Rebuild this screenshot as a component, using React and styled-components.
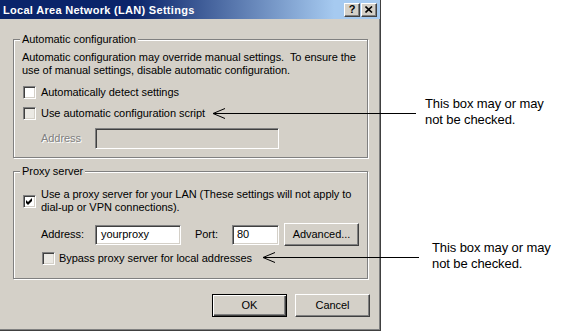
import React from 'react';
import styled, { createGlobalStyle } from 'styled-components';

const GlobalStyle = createGlobalStyle`
  html, body {
    margin: 0;
    padding: 0;
    background: #fff;
  }
  body {
    font-family: "Liberation Sans", Arial, sans-serif;
  }
`;

const Page = styled.div`
  position: relative;
  display: flex;
  align-items: flex-start;
  width: 574px;
  height: 332px;
  overflow: hidden;
`;

const Dialog = styled.div`
  width: 381px;
  height: 331px;
  box-sizing: border-box;
  display: flex;
  flex-direction: column;
  background: #d4d0c8;
  box-shadow: inset -1px -1px 0 #404040, inset -2px -2px 0 #808080;
  font: 11px/13px "Liberation Sans", Arial, sans-serif;
  letter-spacing: -0.05px;
  color: #000;
  white-space: nowrap;
`;

const TitleBar = styled.div`
  height: 19px;
  margin-right: 1px;
  padding: 0 3px;
  display: flex;
  align-items: center;
  justify-content: space-between;
  background: linear-gradient(90deg, #0a246a 0%, #0a246a 35%, #a6caf0 88%);
`;

const Title = styled.span`
  color: #fff;
  font-weight: 700;
  letter-spacing: 0.3px;
  padding-top: 1px;
`;

const TitleButtons = styled.div`
  display: flex;
  gap: 1px;
`;

const TitleButton = styled.div`
  width: 16px;
  height: 14px;
  box-sizing: border-box;
  display: flex;
  align-items: center;
  justify-content: center;
  background: #d4d0c8;
  border: 1px solid;
  border-color: #fff #404040 #404040 #fff;
  box-shadow: inset -1px -1px 0 #808080;
  font-weight: 700;
  font-size: 11px;
  color: #000;
`;

const Body = styled.div`
  flex: 1;
  display: flex;
  flex-direction: column;
  padding: 14px 13px 0 13px;
`;

const GroupBox = styled.fieldset`
  margin: ${p => p.$mt || 0}px 0 0 0;
  padding: ${p => p.$pt}px 8px ${p => p.$pb}px 8px;
  min-width: 0;
  border: 1px solid #808080;
  box-shadow: inset 1px 1px 0 #fff, 1px 1px 0 #fff;
`;

const Legend = styled.legend`
  padding: 0 2px;
  margin-left: -2px;
  background: #d4d0c8;
  line-height: 13px;
`;

const Para = styled.p`
  margin: 0;
`;

const Row = styled.div`
  display: flex;
  align-items: center;
  gap: ${p => p.$gap || 0}px;
  margin: ${p => p.$mt || 0}px 0 0 ${p => p.$ml || 0}px;
`;

const CheckBox = styled.div`
  flex: none;
  width: 13px;
  height: 13px;
  box-sizing: border-box;
  display: flex;
  align-items: center;
  justify-content: center;
  background: ${p => (p.$dim ? '#ebe9e4' : '#fff')};
  border: 1px solid;
  border-color: #808080 #fff #fff #808080;
  box-shadow: inset 1px 1px 0 #404040, inset -1px -1px 0 #d4d0c8;
`;

const Label = styled.span`
  width: ${p => (p.$w ? `${p.$w}px` : 'auto')};
  flex: none;
  margin-left: ${p => p.$ml || 0}px;
  color: ${p => (p.$disabled ? '#808080' : '#000')};
  text-shadow: ${p => (p.$disabled ? '1px 1px 0 #fff' : 'none')};
`;

const TextBox = styled.div`
  width: ${p => p.$w}px;
  height: ${p => p.$h || 20}px;
  box-sizing: border-box;
  flex: none;
  display: flex;
  align-items: center;
  padding-left: ${p => p.$pl || 4}px;
  background: ${p => (p.$disabled ? '#d4d0c8' : '#fff')};
  border: 1px solid;
  border-color: #808080 #fff #fff #808080;
  box-shadow: inset 1px 1px 0 #404040, inset -1px -1px 0 #d4d0c8;
`;

const Button = styled.div`
  width: 75px;
  height: 23px;
  box-sizing: border-box;
  flex: none;
  display: flex;
  align-items: center;
  justify-content: center;
  margin-left: ${p => p.$ml || 0}px;
  background: #d4d0c8;
  border: 1px solid;
  border-color: ${p => (p.$default ? '#000' : '#fff #404040 #404040 #fff')};
  box-shadow: ${p =>
    p.$default
      ? 'inset 1px 1px 0 #fff, inset -1px -1px 0 #404040, inset -2px -2px 0 #808080'
      : 'inset -1px -1px 0 #808080'};
`;

const Footer = styled.div`
  display: flex;
  justify-content: flex-end;
  gap: 8px;
  margin: 15px -2px 0 0;
`;

const Notes = styled.div`
  display: flex;
  flex-direction: column;
  padding-top: 96px;
`;

const Note = styled.div`
  margin: ${p => p.$mt || 0}px 0 0 ${p => p.$ml}px;
  font: 13px/16px "Liberation Sans", Arial, sans-serif;
  letter-spacing: -0.1px;
  color: #000;
  white-space: nowrap;
`;

const Arrows = styled.svg`
  position: absolute;
  left: 0;
  top: 0;
  pointer-events: none;
`;

const Check = ({ checked, dim }) => (
  <CheckBox $dim={dim}>
    {checked && (
      <svg width="9" height="9" viewBox="0 0 9 9">
        <polygon points="1,3 3,5 7,1 7,4 3,8 1,6" fill="#000" />
      </svg>
    )}
  </CheckBox>
);

const Arrow = ({ x1, x2, y }) => (
  <g stroke="#000" strokeWidth="1" fill="none">
    <line x1={x1} y1={y} x2={x2} y2={y} shapeRendering="crispEdges" />
    <polyline points={`${x1 + 12},${y - 5} ${x1},${y} ${x1 + 12},${y + 5}`} />
  </g>
);

export default function App() {
  return (
    <Page>
      <GlobalStyle />
      <Dialog>
        <TitleBar>
          <Title>Local Area Network (LAN) Settings</Title>
          <TitleButtons>
            <TitleButton>?</TitleButton>
            <TitleButton>
              <svg width="8" height="7" viewBox="0 0 8 7">
                <path d="M0.5 0.5 L7 6.5 M7 0.5 L0.5 6.5" stroke="#000" strokeWidth="1.6" />
              </svg>
            </TitleButton>
          </TitleButtons>
        </TitleBar>
        <Body>
          <GroupBox $pt={5} $pb={8}>
            <Legend>Automatic configuration</Legend>
            <Para>
              Automatic configuration may override manual settings.&nbsp; To ensure the
              <br />
              use of manual settings, disable automatic configuration.
            </Para>
            <Row $mt={9} $ml={1} $gap={5}>
              <Check />
              <Label>Automatically detect settings</Label>
            </Row>
            <Row $mt={8} $ml={1} $gap={5}>
              <Check dim />
              <Label>Use automatic configuration script</Label>
            </Row>
            <Row $mt={8} $ml={19}>
              <Label $w={54} $disabled>Address</Label>
              <TextBox $w={184} $h={21} $disabled />
            </Row>
          </GroupBox>
          <GroupBox $mt={7} $pt={10} $pb={13}>
            <Legend>Proxy server</Legend>
            <Row $ml={1} $gap={5}>
              <Check checked />
              <Label>
                Use a proxy server for your LAN (These settings will not apply to
                <br />
                dial-up or VPN connections).
              </Label>
            </Row>
            <Row $mt={9} $ml={19}>
              <Label $w={54}>Address:</Label>
              <TextBox $w={86} $pl={5}>yourproxy</TextBox>
              <Label $w={37} $ml={14}>Port:</Label>
              <TextBox $w={47}>80</TextBox>
              <Button $ml={5}>Advanced...</Button>
            </Row>
            <Row $mt={6} $ml={20} $gap={4}>
              <Check dim />
              <Label>Bypass proxy server for local addresses</Label>
            </Row>
          </GroupBox>
          <Footer>
            <Button $default>OK</Button>
            <Button>Cancel</Button>
          </Footer>
        </Body>
      </Dialog>
      <Notes>
        <Note $ml={44}>
          This box may or may
          <br />
          not be checked.
        </Note>
        <Note $mt={112} $ml={51}>
          This box may or may
          <br />
          not be checked.
        </Note>
      </Notes>
      <Arrows width="574" height="332">
        <Arrow x1={213} x2={416} y={113.5} />
        <Arrow x1={263} x2={419} y={257.5} />
      </Arrows>
    </Page>
  );
}
